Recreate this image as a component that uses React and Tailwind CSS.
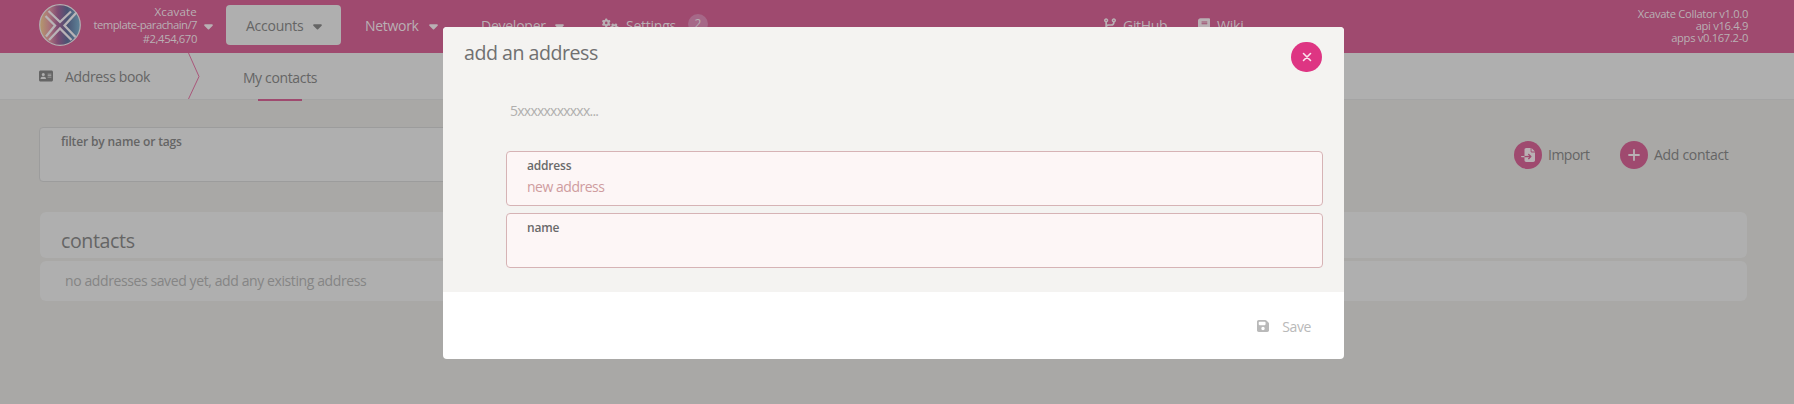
import React from 'react';
import { FaCaretDown, FaAddressCard, FaGears, FaCodeBranch, FaFileImport, FaFloppyDisk, FaBook } from 'react-icons/fa6';

function Logo() {
  return (
    <svg className="h-[42px] w-[42px] shrink-0" viewBox="0 0 42 42">
      <defs>
        <linearGradient id="xc" x1="0" x2="1" y1="0" y2="0">
          <stop offset="0" stopColor="#b59a6c" />
          <stop offset="0.25" stopColor="#a8707a" />
          <stop offset="0.45" stopColor="#7d4b72" />
          <stop offset="0.68" stopColor="#495373" />
          <stop offset="1" stopColor="#5f8499" />
        </linearGradient>
      </defs>
      <circle cx="21" cy="21" r="20.3" fill="url(#xc)" stroke="#b3aeb1" strokeWidth="1.2" />
      <g fill="none" stroke="#b8b3b6" strokeWidth="2.3">
        <path d="M9.5 7 L21 18 L32 7.500" />
        <path d="M6.500 12 L16 21.500 L7 32.500" />
        <path d="M37.500 8.500 L25.500 21.500 L36.500 33" />
        <path d="M10 36 L21 24.500 L32.500 36" />
      </g>
    </svg>
  );
}

function NavItem({ label, className, width }) {
  return (
    <div className={`flex h-10 shrink-0 items-center ${className}`}>
      <span className={`${width} shrink-0`}>{label}</span>
      <FaCaretDown className="mt-px h-[14px] w-[9px] shrink-0" />
    </div>
  );
}

function Header() {
  return (
    <header className="flex h-[53px] bg-[#9f4a6f] pl-[39px] text-[#b9b0b4]">
      <div className="mt-1 flex h-[42px] w-[187px] shrink-0 items-center">
        <Logo />
        <div className="flex w-[116px] shrink-0 flex-col items-end text-[11.300px] leading-[13.500px]">
          <span className="text-[11.600px] tracking-[0.150px]">Xcavate</span>
          <span className="tracking-[-0.520px]">template-parachain/7</span>
          <span className="tracking-[-0.400px]">#2,454,670</span>
        </div>
        <FaCaretDown className="ml-[7px] mt-px h-[14px] w-[9px] shrink-0" />
      </div>
      <NavItem label="Accounts" width="w-[67px]" className="mt-[5px] w-[115px] rounded bg-[#afafaf] pl-5 tracking-[-0.250px] text-[#656565]" />
      <NavItem label="Network" width="w-[64px]" className="mt-[5px] w-[140px] pl-[24px] tracking-[-0.300px]" />
      <NavItem label="Developer" width="w-[74px]" className="mt-[5px] w-[121px] tracking-[-0.250px]" />
      <div className="mt-[5px] flex h-10 w-[502px] shrink-0 items-center">
        <FaGears className="h-[14px] w-[17px]" />
        <span className="ml-[7px] w-[62px] tracking-[-0.250px]">Settings</span>
        <span className="mb-[2px] flex h-5 w-5 items-center justify-center rounded-full bg-[#a66888] text-[12px]">2</span>
      </div>
      <div className="mt-[5px] flex h-10 w-[94px] shrink-0 items-center">
        <FaCodeBranch className="h-[14px] w-[12px]" />
        <span className="ml-[7px] tracking-[-0.300px]">GitHub</span>
      </div>
      <div className="mt-[5px] flex h-10 shrink-0 items-center">
        <FaBook className="h-[14px] w-[12px]" />
        <span className="ml-[7px] tracking-[-0.200px]">Wiki</span>
      </div>
      <div className="ml-auto mr-[46px] mt-2 flex flex-col items-end text-[11.200px] leading-3 tracking-[-0.320px]">
        <span>Xcavate Collator v1.0.0</span>
        <span>api v16.4.9</span>
        <span>apps v0.167.2-0</span>
      </div>
    </header>
  );
}

function Tabs() {
  return (
    <nav className="flex h-[48px] tracking-[-0.350px] text-[#656565]">
      <div className="flex h-[46px] w-[149px] items-center pl-[39px]">
        <FaAddressCard className="h-[14px] w-[14px] shrink-0" />
        <span className="ml-3">Address book</span>
      </div>
      <svg className="ml-[39px] h-[46px] w-[12px]" viewBox="0 0 12 46" fill="none">
        <path d="M0.5 0 L11 23.500 L0.5 46" stroke="#a9567a" strokeWidth="1" />
      </svg>
      <div className="ml-[43px] flex w-[75px] flex-col items-center">
        <span className="mr-px h-[46px] leading-[49px]">My contacts</span>
        <div className="mr-px h-[2px] w-11 bg-[#9f4a6f]" />
      </div>
    </nav>
  );
}

function Action({ icon, label, className }) {
  return (
    <div className={`flex shrink-0 items-center ${className}`}>
      <div className="flex h-7 w-7 shrink-0 items-center justify-center rounded-full bg-[#9f4a6f] text-[#b9b0b4]">{icon}</div>
      <span className="mb-px ml-[6px]">{label}</span>
    </div>
  );
}

function Field({ label, value }) {
  return (
    <div className="h-[55px] rounded border border-[#d6b3b5] bg-[#fdf6f6] pl-5">
      <div className="pt-[6px] text-[12px] font-semibold leading-[16px] tracking-[-0.200px] text-[#6a6a6a]">{label}</div>
      <div className="mt-[2px] text-[14px] leading-[21px] tracking-[-0.480px] text-[#cf9c9f]">{value}</div>
    </div>
  );
}

function Modal() {
  return (
    <div role="dialog" className="absolute left-[443px] top-[27px] h-[332px] w-[901px] overflow-hidden rounded bg-white">
      <div className="h-[265px] bg-[#f4f3f1] pl-[21px] pr-[21px]">
        <div className="flex h-[72px] justify-between">
          <h1 className="pt-[12px] text-[19.600px] leading-7 tracking-[-0.480px] text-[#707070]">add an address</h1>
          <button className="mr-[1px] mt-[15px] flex h-[30px] w-[31px] items-center justify-center rounded-full bg-[#de3583] text-[#fbe4ee]">
            <svg className="h-[10px] w-[10px]" viewBox="0 0 10 10" fill="none" stroke="currentColor" strokeWidth="1.600" strokeLinecap="round">
              <path d="M1.500 1.500 L8.500 8.500 M8.500 1.500 L1.500 8.500" />
            </svg>
          </button>
        </div>
        <div className="h-[52px] pl-[46px] pt-[2px] text-[14px] leading-5 tracking-[-0.760px] text-[#b0afae]">5xxxxxxxxxxx...</div>
        <div className="ml-[42px] flex flex-col gap-[7px]">
          <Field label="address" value="new address" />
          <Field label="name" value="" />
        </div>
      </div>
      <div className="flex h-[67px] items-center justify-end pr-[33px] text-[#b9b9b9]">
        <FaFloppyDisk className="h-[14px] w-[12px]" />
        <span className="ml-[13px] mt-px tracking-[-0.400px]">Save</span>
      </div>
    </div>
  );
}

export default function App() {
  return (
    <div className="relative h-[404px] w-[1794px] overflow-hidden whitespace-nowrap bg-[#a9a8a6] font-['Open_Sans','Noto_Sans',sans-serif] text-[14px]">
      <Header />
      <div className="h-[46px] bg-[#afafaf]">
        <Tabs />
      </div>
      <div className="border-t border-[#a4a4a4] px-[39px] pt-[27px]">
        <div className="flex h-[55px] items-start text-[#656565]">
          <div className="h-[55px] w-[1100px] rounded border border-[#9c9c9c] bg-[#afafaf] pl-[21px] pt-[6px] text-[12px] font-semibold leading-4 tracking-[-0.140px]">
            filter by name or tags
          </div>
          <Action
            className="ml-auto mt-[14px] w-[106px] tracking-[-0.500px]"
            label="Import"
            icon={<FaFileImport className="h-[14px] w-[14px]" />}
          />
          <Action
            className="mr-[26px] mt-[14px] w-[109px] tracking-[-0.300px]"
            label="Add contact"
            icon={
              <svg className="h-[12px] w-[12px]" viewBox="0 0 12 12" fill="none" stroke="currentColor" strokeWidth="1.800" strokeLinecap="round">
                <path d="M6 1 V11 M1 6 H11" />
              </svg>
            }
          />
        </div>
        <div className="ml-px mr-[8px] mt-[30px] flex flex-col gap-[3px]">
          <div className="h-[46px] rounded-md bg-[#afafaf] pl-[21px] pt-[15px] text-[19.600px] leading-7 tracking-[-0.400px] text-[#656565]">contacts</div>
          <div className="h-[40px] rounded-md bg-[#afafaf] pl-[25px] leading-[40px] tracking-[-0.400px] text-[#858585]">no addresses saved yet, add any existing address</div>
        </div>
      </div>
      <Modal />
    </div>
  );
}
